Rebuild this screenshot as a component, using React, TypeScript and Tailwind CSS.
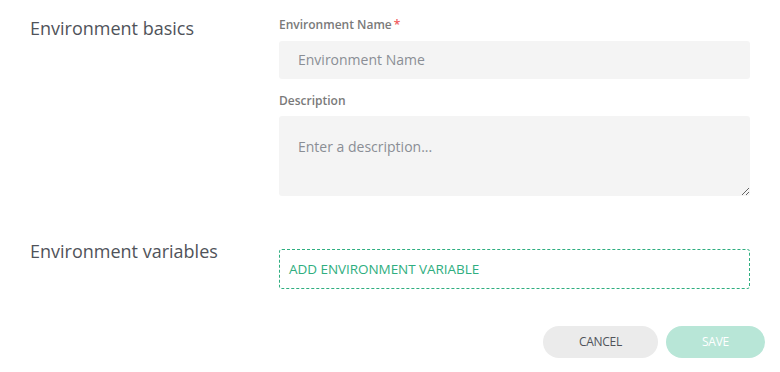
export default function App() {
  return (
    <div className="min-h-[372px] w-[780px] bg-white font-['Open_Sans',sans-serif] pt-[14px]">
      {/* basics */}
      <div className="flex px-[30px]">
        <div className="w-[249px] shrink-0 text-[18px] leading-[28px] text-[#50535a]">
          Environment basics
        </div>
        <div className="w-[472px]">
          <label className="block text-[12px] font-semibold leading-[16px] text-[#7a7a7a] mt-[3px]">
            Environment Name<span className="text-[#f0585c] ml-[2px]">*</span>
          </label>
          <input
            placeholder="Environment Name"
            className="mt-[8px] block h-[38px] w-full rounded-[3px] bg-[#f4f4f4] px-[19px] pb-[2px] text-[14px] text-[#50535a] placeholder:text-[#8a8e95] outline-none"
          />
          <label className="mt-[14px] block text-[12px] font-semibold leading-[16px] text-[#7a7a7a]">
            Description
          </label>
          <textarea
            placeholder="Enter a description..."
            className="mt-[7px] block h-[80px] w-full rounded-[3px] bg-[#f4f4f4] px-[19px] pt-[21px] text-[14px] leading-[20px] text-[#50535a] placeholder:text-[#8a8e95] outline-none"
          />
        </div>
      </div>

      {/* variables */}
      <div className="mt-[41px] flex px-[30px]">
        <div className="w-[249px] shrink-0 text-[18px] leading-[28px] text-[#50535a]">
          Environment variables
        </div>
        <div className="w-[472px] pt-[12px]">
          <button className="flex h-[40px] w-full items-center rounded-[3px] border border-dashed border-[#2fae80] px-[9px] text-[13.5px] tracking-[-0.05px] text-[#2fae80]">
            ADD ENVIRONMENT VARIABLE
          </button>
        </div>
      </div>

      <div className="mt-[37px] flex justify-end gap-[8px] pr-[15px]">
        <button className="h-[32px] w-[115px] rounded-full bg-[#ebebeb] text-[12px] tracking-[-0.3px] text-[#50535a]">
          CANCEL
        </button>
        <button className="h-[32px] w-[99px] rounded-full bg-[#b8e6d7] text-[12px] tracking-[-0.3px] text-white">
          SAVE
        </button>
      </div>
    </div>
  );
}
